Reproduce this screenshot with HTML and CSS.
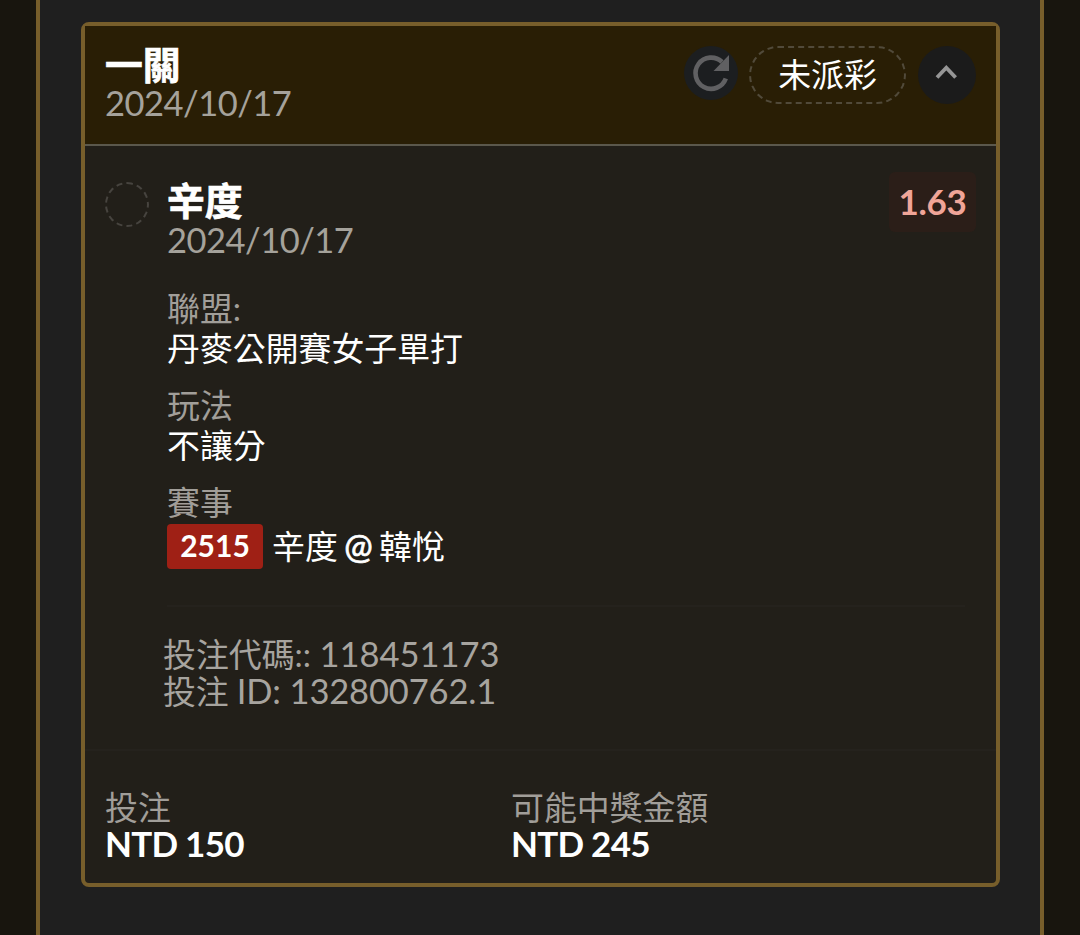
FILE: index.html
```html
<!DOCTYPE html>
<html lang="zh-Hant">
<head>
  <meta charset="UTF-8" />
  <meta name="viewport" content="width=device-width, initial-scale=1.0"/>
  <title>投注記錄</title>
  <link rel="stylesheet" href="styles.css">
</head>
<body>
  <main class="panel">
    <section class="card">
      <header class="card-header">
        <div class="heading">
          <h1 class="title">一關</h1>
          <p class="date">2024/10/17</p>
        </div>
        <div class="actions">
          <button class="refresh" aria-label="refresh">
            <svg width="54" height="54" viewBox="0 0 54 54">
              <path d="M41.8 32.5A15.6 15.6 0 1 1 38 16" fill="none" stroke="#606062" stroke-width="4.6"/>
              <path d="M45 9V25H29.5Z" fill="#606062"/>
            </svg>
          </button>
          <span class="status">未派彩</span>
          <button class="toggle" aria-label="toggle">
            <svg width="58" height="58" viewBox="0 0 58 58">
              <path d="M19 31.5L28.3 21.8L37.6 31.5" fill="none" stroke="#969696" stroke-width="3.8"/>
            </svg>
          </button>
        </div>
      </header>

      <div class="bet">
        <span class="result"></span>
        <div class="bet-info">
          <h2 class="title">辛度</h2>
          <p class="date">2024/10/17</p>

          <dl class="meta">
            <dt>聯盟:</dt>
            <dd>丹麥公開賽女子單打</dd>
            <dt>玩法</dt>
            <dd>不讓分</dd>
            <dt>賽事</dt>
            <dd class="match"><span class="badge">2515</span><span class="teams">辛度 <span class="at">@</span> 韓悅</span></dd>
          </dl>

          <div class="codes">
            <p>投注代碼:: <span class="num">118451173</span></p>
            <p class="bet-id">投注 <span class="num">ID: 132800762.1</span></p>
          </div>
        </div>
        <span class="odds">1.63</span>
      </div>

      <footer class="totals">
        <div>
          <p class="label">投注</p>
          <p class="amount">NTD 150</p>
        </div>
        <div>
          <p class="label">可能中獎金額</p>
          <p class="amount">NTD 245</p>
        </div>
      </footer>
    </section>
  </main>
</body>
</html>
```
FILE: styles.css
```css
* { box-sizing: border-box; }
body {
  margin: 0;
  background-color: #18150e;
  color: #fff;
  font-family: Lato, "Noto Sans CJK TC", sans-serif;
  font-size: 32.9px;
  line-height: 37px;
  overflow: hidden;
}
h1, h2, p, dl, dd { margin: 0; }
button { padding: 0; border: none; }
svg { display: block; }

.panel {
  height: 935px;
  margin: 0 36px;
  padding: 22px 40px 0 41px;
  border-left: 4px solid #775e2b;
  border-right: 4px solid #775e2b;
  background-color: #1f1f1f;
}
.card {
  height: 865px;
  border: 4px solid #775e2b;
  border-radius: 8px;
  background-color: #221f19;
}

.card-header {
  display: flex;
  justify-content: space-between;
  height: 120px;
  padding: 20px 20px 0;
  border-bottom: 2px solid #5b584c;
  background-color: #291e05;
}
.title { font-size: 37.8px; line-height: 38px; font-weight: 700; -webkit-text-stroke: 0.7px #fff; }
.date { color: #a5a29b; font-size: 34.5px; letter-spacing: -0.5px; white-space: nowrap; }
.actions { display: flex; align-items: flex-start; }
.refresh { margin-right: 11px; border-radius: 50%; background-color: #1c1e20; }
.status {
  width: 157px;
  height: 58px;
  margin-right: 12px;
  border: 2px dashed #514a3a;
  border-radius: 29px;
  line-height: 54px;
  text-align: center;
}
.toggle { border-radius: 50%; background-color: #1b1b1b; }

.bet {
  display: flex;
  height: 605px;
  padding: 36px 20px 0;
  border-bottom: 2px solid #25221d;
}
.result {
  width: 44px;
  height: 45px;
  margin-right: 18px;
  border: 2px dashed #47443f;
  border-radius: 50%;
}
.bet-info { width: 722px; }
.bet-info .date { margin-top: 1px; }
.odds {
  width: 87px;
  height: 60px;
  margin-top: -10px;
  border-radius: 6px;
  background-color: #2b1e18;
  color: #f0a598;
  font-size: 35px;
  font-weight: 700;
  letter-spacing: -0.3px;
  line-height: 58px;
  text-align: center;
}

.meta { margin-top: 31px; line-height: 40px; }
.meta dt { color: #a19e99; }
.meta dd { margin-bottom: 17px; }
.meta .match {
  display: flex;
  align-items: center;
  gap: 9px;
  height: 45px;
  margin: 1px 0 0;
}
.badge {
  width: 96px;
  height: 45px;
  border-radius: 4px;
  background-color: #9f2015;
  font-size: 30px;
  font-weight: 700;
  line-height: 43px;
  text-align: center;
}
.teams { word-spacing: -2px; }
.at { font-size: 34px; -webkit-text-stroke: 0.7px #fff; }

.codes {
  width: 798px;
  margin-top: 36px;
  padding-top: 28px;
  border-top: 2px solid #25221d;
  color: #a7a49f;
}
.codes p { margin-left: -4px; }
.codes .bet-id { margin-top: -1px; letter-spacing: -0.15px; }
.num { font-size: 34.5px; }

.totals {
  display: grid;
  grid-template-columns: 406px 1fr;
  padding: 38px 20px 0;
}
.label { color: #a19e99; }
.amount { margin-top: -1px; font-size: 35px; font-weight: 700; letter-spacing: -0.75px; }
```
